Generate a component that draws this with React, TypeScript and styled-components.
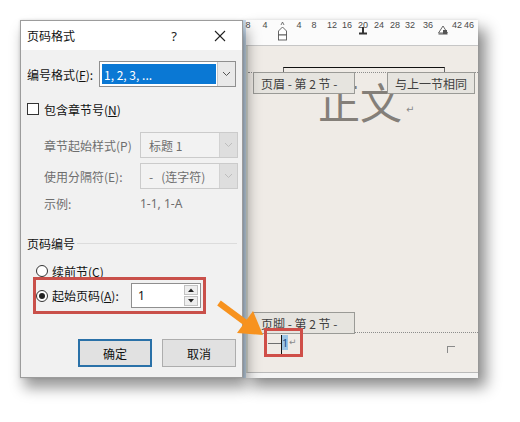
import React from "react";
import styled, { createGlobalStyle } from "styled-components";

const Global = createGlobalStyle`
  html, body { margin: 0; padding: 0; background: #ffffff; }
  body { font-family: "Noto Sans CJK SC", "Noto Sans", sans-serif; }
`;

const cjk = `"Noto Sans CJK SC", "Noto Sans", sans-serif`;
const latin = `"Noto Sans", "Noto Sans CJK SC", sans-serif`;

const Stage = styled.div`
  position: relative;
  width: 520px;
  height: 422px;
  overflow: hidden;
  background: #ffffff;
`;

/* ---------- Word document window ---------- */

const DocWindow = styled.div`
  position: absolute;
  left: 243px;
  top: 20px;
  width: 235px;
  height: 358px;
  display: flex;
  flex-direction: column;
  background: #f3f3f2;
  border-left: 3px solid #c8dcef;
  box-sizing: border-box;
  box-shadow: 0 0 3px rgba(0, 0, 0, 0.12), 8px 9px 14px rgba(0, 0, 0, 0.45);
`;

const Ruler = styled.div`
  position: relative;
  height: 25px;
  flex: none;
  background: #fbfbfb;
  border-bottom: 1px solid #c6c6c6;
`;

const RulerNum = styled.span`
  position: absolute;
  top: 0;
  transform: translateX(-50%);
  font-family: "Liberation Sans", sans-serif;
  font-size: 9px;
  line-height: 10px;
  color: #4a4a4a;
`;

const RulerMark = styled.svg`
  position: absolute;
  overflow: visible;
`;

const Page = styled.div`
  flex: 1;
  display: flex;
  flex-direction: column;
  background: #efebe6;
  border-left: 2px solid #d6d9d0;
  border-bottom: 1px solid #b9b9b9;
`;

const HeaderRule = styled.div`
  margin: 21px 0 0 35px;
  width: 162px;
  height: 5px;
  border-top: 1.5px solid #111;
  border-left: 1px solid #666;
  border-right: 1px solid #666;
  box-sizing: border-box;
`;

const Boundary = styled.div`
  position: relative;
  height: 0;
  border-top: 1px dotted #8c8c8c;
`;

const AreaTab = styled.div<{ $side: "left" | "right"; $place: "below" | "above" }>`
  position: absolute;
  ${(p) => (p.$side === "left" ? "left: 5px; width: 102px;" : "right: 3px; width: 88px;")}
  ${(p) => (p.$place === "below" ? "top: -1px;" : "bottom: -1px;")}
  height: 22px;
  box-sizing: border-box;
  z-index: 2;
  display: flex;
  align-items: center;
  padding-left: 7px;
  background: #e6e4df;
  border: 1px solid #9a9a96;
  font-family: ${cjk};
  font-size: 12px;
  color: #404040;
  white-space: pre;
`;

const BodyLine = styled.div`
  margin: 4px 0 0 70px;
  display: flex;
  align-items: flex-end;
`;

const BigText = styled.span`
  font-family: ${cjk};
  font-size: 42px;
  line-height: 47px;
  color: #847f79;
`;

const ReturnMark = styled.span<{ $size: number }>`
  font-family: "DejaVu Sans", sans-serif;
  font-size: ${(p) => p.$size}px;
  line-height: 1;
  color: #8a8a8a;
`;

const Filler = styled.div`
  flex: 1;
`;

const FooterRow = styled.div`
  display: flex;
  align-items: flex-start;
  margin-top: -5px;
  height: 44px;
  position: relative;
  z-index: 3;
`;

const Callout = styled.div`
  margin-left: 16px;
  width: 39px;
  height: 29px;
  box-sizing: border-box;
  border: 3px solid #cf4e48;
  display: flex;
  align-items: center;
  padding-left: 1px;
`;

const Dash = styled.span`
  width: 13px;
  height: 1px;
  background: #6e6e6e;
  margin-top: 2px;
`;

const Caret = styled.span`
  width: 1px;
  height: 19px;
  background: #111;
  align-self: flex-end;
`;

const Selected = styled.span`
  width: 6px;
  height: 15px;
  background: #9cc5e6;
  color: #1d4f86;
  font-family: ${latin};
  font-size: 11px;
  line-height: 15px;
  text-align: center;
  margin-right: 1px;
`;

const CornerMark = styled.span`
  margin: 18px 23px 0 auto;
  width: 7px;
  height: 6px;
  border-top: 1px solid #8a8a8a;
  border-left: 1px solid #8a8a8a;
`;

const StatusStrip = styled.div`
  height: 5px;
  flex: none;
  background: #f4f4f4;
`;

/* ---------- Page number format dialog ---------- */

const Dialog = styled.div`
  position: absolute;
  left: 20px;
  top: 20px;
  width: 223px;
  height: 358px;
  box-sizing: border-box;
  display: flex;
  flex-direction: column;
  background: #f1f1f1;
  border: 1px solid #9c9c9c;
  box-shadow: 0 0 3px rgba(0, 0, 0, 0.14), 4px 10px 13px rgba(0, 0, 0, 0.4);
  z-index: 5;
  font-family: ${cjk};
  font-size: 12px;
  color: #111;
`;

const TitleBar = styled.div`
  height: 29px;
  flex: none;
  display: flex;
  align-items: center;
  background: #ffffff;
  padding-left: 6px;
`;

const Title = styled.span`
  flex: 1;
  font-size: 12px;
`;

const TitleButton = styled.span`
  width: 24px;
  height: 24px;
  display: flex;
  align-items: center;
  justify-content: center;
  font-family: ${latin};
  font-size: 13px;
  color: #222;
`;

const TitleGap = styled.span<{ $w: number }>`
  width: ${(p) => p.$w}px;
`;

const Body = styled.div`
  display: flex;
  flex-direction: column;
  padding: 0 3px 0 6px;
`;

const FieldRow = styled.div<{ $top: number; $indent?: number; $h?: number }>`
  display: flex;
  align-items: center;
  margin-top: ${(p) => p.$top}px;
  padding-left: ${(p) => p.$indent ?? 0}px;
  height: ${(p) => p.$h ?? 26}px;
`;

const Label = styled.span<{ $w?: number; $muted?: boolean; $latin?: boolean }>`
  ${(p) => (p.$w ? `width: ${p.$w}px; flex: none;` : "")}
  color: ${(p) => (p.$muted ? "#6e6e6e" : "#111")};
  font-family: ${(p) => (p.$latin ? latin : cjk)};
  white-space: nowrap;
  font-size: 12px;
`;

const Key = styled.span`
  text-decoration: underline;
`;

const SelectBox = styled.div<{ $w: number; $disabled?: boolean }>`
  width: ${(p) => p.$w}px;
  height: 26px;
  box-sizing: border-box;
  display: flex;
  border: 1px solid ${(p) => (p.$disabled ? "#cbcbcb" : "#8f8f8f")};
  background: ${(p) => (p.$disabled ? "#f2f2f2" : "#ffffff")};
`;

const SelectValue = styled.span<{ $active?: boolean; $muted?: boolean }>`
  flex: 1;
  display: flex;
  align-items: center;
  margin: ${(p) => (p.$active ? "2px 1px 2px 2px" : "0")};
  padding-left: ${(p) => (p.$active ? 2 : 8)}px;
  background: ${(p) => (p.$active ? "#0a78d4" : "transparent")};
  color: ${(p) => (p.$active ? "#ffffff" : p.$muted ? "#6e6e6e" : "#111")};
  font-family: ${cjk};
  font-size: 12px;
  white-space: pre;
`;

const DropButton = styled.span<{ $disabled?: boolean }>`
  width: 17px;
  flex: none;
  display: flex;
  align-items: center;
  justify-content: center;
  background: ${(p) => (p.$disabled ? "#dedede" : "#e9e9e9")};
  border-left: 1px solid ${(p) => (p.$disabled ? "#d2d2d2" : "#c9c9c9")};
`;

const CheckBox = styled.span`
  width: 12px;
  height: 12px;
  box-sizing: border-box;
  border: 1px solid #333;
  background: #fff;
  margin: 0 5px 0 0;
  flex: none;
`;

const Radio = styled.span<{ $on?: boolean }>`
  width: 12px;
  height: 12px;
  box-sizing: border-box;
  border-radius: 50%;
  border: 1px solid #333;
  background: #fff;
  margin-right: 4px;
  flex: none;
  display: flex;
  align-items: center;
  justify-content: center;
  &::after {
    content: "";
    width: 6px;
    height: 6px;
    border-radius: 50%;
    background: ${(p) => (p.$on ? "#222" : "transparent")};
  }
`;

const SectionHead = styled.div`
  display: flex;
  align-items: center;
  gap: 2px;
  margin-top: 20px;
  height: 20px;
`;

const SectionLine = styled.span`
  flex: 1;
  height: 1px;
  background: #dcdcdc;
  margin-right: 2px;
`;

const StartBox = styled.div`
  display: flex;
  align-items: center;
  margin: -2px 0 0 6px;
  width: 173px;
  height: 37px;
  box-sizing: border-box;
  border: 3px solid #c9504a;
`;

const SpinInput = styled.div`
  margin-left: auto;
  margin-right: 2px;
  width: 70px;
  height: 25px;
  box-sizing: border-box;
  border: 1px solid #8f8f8f;
  background: #fff;
  display: flex;
  align-items: center;
  padding: 0 2px 0 6px;
  font-family: ${latin};
  font-size: 12px;
`;

const SpinValue = styled.span`
  flex: 1;
`;

const SpinButtons = styled.span`
  width: 14px;
  height: 21px;
  display: flex;
  flex-direction: column;
  gap: 1px;
`;

const SpinHalf = styled.span`
  flex: 1;
  display: flex;
  align-items: center;
  justify-content: center;
  background: #eeeeee;
  border: 1px solid #c2c2c2;
  box-sizing: border-box;
`;

const ButtonRow = styled.div`
  display: flex;
  justify-content: flex-end;
  gap: 10px;
  margin-top: 25px;
  margin-right: 3px;
`;

const DialogButton = styled.button<{ $primary?: boolean }>`
  width: 74px;
  height: 28px;
  box-sizing: border-box;
  padding: 0;
  background: #e1e1e1;
  border: ${(p) => (p.$primary ? "2px solid #2a71a8" : "1px solid #adadad")};
  font-family: ${cjk};
  font-size: 12px;
  color: #111;
`;

const Pointer = styled.svg`
  position: absolute;
  left: 0;
  top: 0;
  z-index: 6;
  pointer-events: none;
`;

/* ---------- data ---------- */

const rulerNumbers: { label: string; x: number }[] = [
  { label: "8", x: 248 },
  { label: "4", x: 265 },
  { label: "4", x: 299 },
  { label: "8", x: 314 },
  { label: "12", x: 332 },
  { label: "16", x: 347 },
  { label: "20", x: 363 },
  { label: "24", x: 379 },
  { label: "28", x: 395 },
  { label: "32", x: 410 },
  { label: "36", x: 428 },
  { label: "42", x: 457 },
  { label: "46", x: 469 },
];

const RULER_ORIGIN = 246;

const Chevron = ({ color }: { color: string }) => (
  <svg width="9" height="6" viewBox="0 0 9 6">
    <polyline points="1,1 4.5,4.5 8,1" fill="none" stroke={color} strokeWidth="1" />
  </svg>
);

const Triangle = ({ up }: { up: boolean }) => (
  <svg width="6" height="4" viewBox="0 0 6 4">
    <polygon points={up ? "0,4 3,0.5 6,4" : "0,0 6,0 3,3.5"} fill="#222" />
  </svg>
);

const Select = ({
  w,
  value,
  active,
  disabled,
}: {
  w: number;
  value: string;
  active?: boolean;
  disabled?: boolean;
}) => (
  <SelectBox $w={w} $disabled={disabled}>
    <SelectValue $active={active} $muted={disabled}>
      {value}
    </SelectValue>
    <DropButton $disabled={disabled}>
      <Chevron color={disabled ? "#bdbdbd" : "#555"} />
    </DropButton>
  </SelectBox>
);

export default function App() {
  return (
    <Stage>
      <Global />

      <DocWindow>
        <Ruler>
          {rulerNumbers.map((n, i) => (
            <RulerNum key={i} style={{ left: n.x - RULER_ORIGIN }}>
              {n.label}
            </RulerNum>
          ))}
          {/* left indent marker */}
          <RulerMark width="9" height="20" viewBox="0 0 9 20" style={{ left: 282 - RULER_ORIGIN - 4.5, top: 1 }}>
            <polyline points="3,4 4.5,1 6,4" fill="none" stroke="#555" strokeWidth="0.8" />
            <polygon points="0.5,10 4.5,6 8.5,10 8.5,14 0.5,14" fill="#fff" stroke="#555" strokeWidth="0.9" />
            <rect x="0.5" y="14" width="8" height="5" fill="#fff" stroke="#555" strokeWidth="0.9" />
          </RulerMark>
          {/* center tab */}
          <RulerMark width="10" height="8" viewBox="0 0 10 8" style={{ left: 363 - RULER_ORIGIN - 5, top: 7 }}>
            <line x1="5" y1="0" x2="5" y2="6" stroke="#333" strokeWidth="2" />
            <line x1="1" y1="6.5" x2="9" y2="6.5" stroke="#333" strokeWidth="2" />
          </RulerMark>
          {/* right indent marker */}
          <RulerMark width="10" height="10" viewBox="0 0 10 10" style={{ left: 443 - RULER_ORIGIN - 5, top: 5 }}>
            <polygon points="0.5,8 5,1 9.5,8" fill="#fff" stroke="#555" strokeWidth="0.9" />
            <rect x="5" y="5" width="4" height="4" fill="#555" />
            <line x1="0.5" y1="9" x2="9.5" y2="9" stroke="#555" strokeWidth="1" />
          </RulerMark>
        </Ruler>

        <Page>
          <HeaderRule />
          <Boundary>
            <AreaTab $side="left" $place="below">页眉 - 第 2 节 -</AreaTab>
            <AreaTab $side="right" $place="below">与上一节相同</AreaTab>
          </Boundary>
          <BodyLine>
            <BigText>正文</BigText>
            <ReturnMark $size={10} style={{ marginBottom: 9, marginLeft: 4 }}>
              ↵
            </ReturnMark>
          </BodyLine>
          <Filler />
          <Boundary>
            <AreaTab $side="left" $place="above">页脚 - 第 2 节 -</AreaTab>
          </Boundary>
          <FooterRow>
            <Callout>
              <Dash />
              <Caret />
              <Selected>1</Selected>
              <ReturnMark $size={9}>↵</ReturnMark>
            </Callout>
            <CornerMark />
          </FooterRow>
        </Page>
        <StatusStrip />
      </DocWindow>

      <Dialog>
        <TitleBar>
          <Title>页码格式</Title>
          <TitleButton>?</TitleButton>
          <TitleGap $w={22} />
          <TitleButton>
            <svg width="12" height="12" viewBox="0 0 12 12">
              <line x1="1" y1="1" x2="11" y2="11" stroke="#222" strokeWidth="1.1" />
              <line x1="11" y1="1" x2="1" y2="11" stroke="#222" strokeWidth="1.1" />
            </svg>
          </TitleButton>
          <TitleGap $w={10} />
        </TitleBar>

        <Body>
          <FieldRow $top={11}>
            <Label $w={72}>
              编号格式(<Key>F</Key>):
            </Label>
            <Select w={137} value="1, 2, 3, ..." active />
          </FieldRow>

          <FieldRow $top={12} $h={20}>
            <CheckBox />
            <Label>
              包含章节号(<Key>N</Key>)
            </Label>
          </FieldRow>

          <FieldRow $top={13} $indent={17}>
            <Label $w={96} $muted>
              章节起始样式(P)
            </Label>
            <Select w={98} value="标题 1" disabled />
          </FieldRow>

          <FieldRow $top={5} $indent={17}>
            <Label $w={96} $muted>
              使用分隔符(E):
            </Label>
            <Select w={98} value="-   (连字符)" disabled />
          </FieldRow>

          <FieldRow $top={4} $indent={17} $h={20}>
            <Label $w={96} $muted>
              示例:
            </Label>
            <Label $muted $latin>
              1-1, 1-A
            </Label>
          </FieldRow>

          <SectionHead>
            <Label>页码编号</Label>
            <SectionLine />
          </SectionHead>

          <FieldRow $top={10} $indent={9} $h={16}>
            <Radio />
            <Label>
              续前节(<Key>C</Key>)
            </Label>
          </FieldRow>

          <StartBox>
            <Radio $on />
            <Label>
              起始页码(<Key>A</Key>):
            </Label>
            <SpinInput>
              <SpinValue>1</SpinValue>
              <SpinButtons>
                <SpinHalf>
                  <Triangle up />
                </SpinHalf>
                <SpinHalf>
                  <Triangle up={false} />
                </SpinHalf>
              </SpinButtons>
            </SpinInput>
          </StartBox>

          <ButtonRow>
            <DialogButton $primary>确定</DialogButton>
            <DialogButton>取消</DialogButton>
          </ButtonRow>
        </Body>
      </Dialog>

      <Pointer width="520" height="422" viewBox="0 0 520 422">
        <line x1="219" y1="303" x2="250" y2="326" stroke="#f7921e" strokeWidth="6" strokeLinecap="butt" />
        <polygon points="263,335 237,333 253,311" fill="#f7921e" />
      </Pointer>
    </Stage>
  );
}
